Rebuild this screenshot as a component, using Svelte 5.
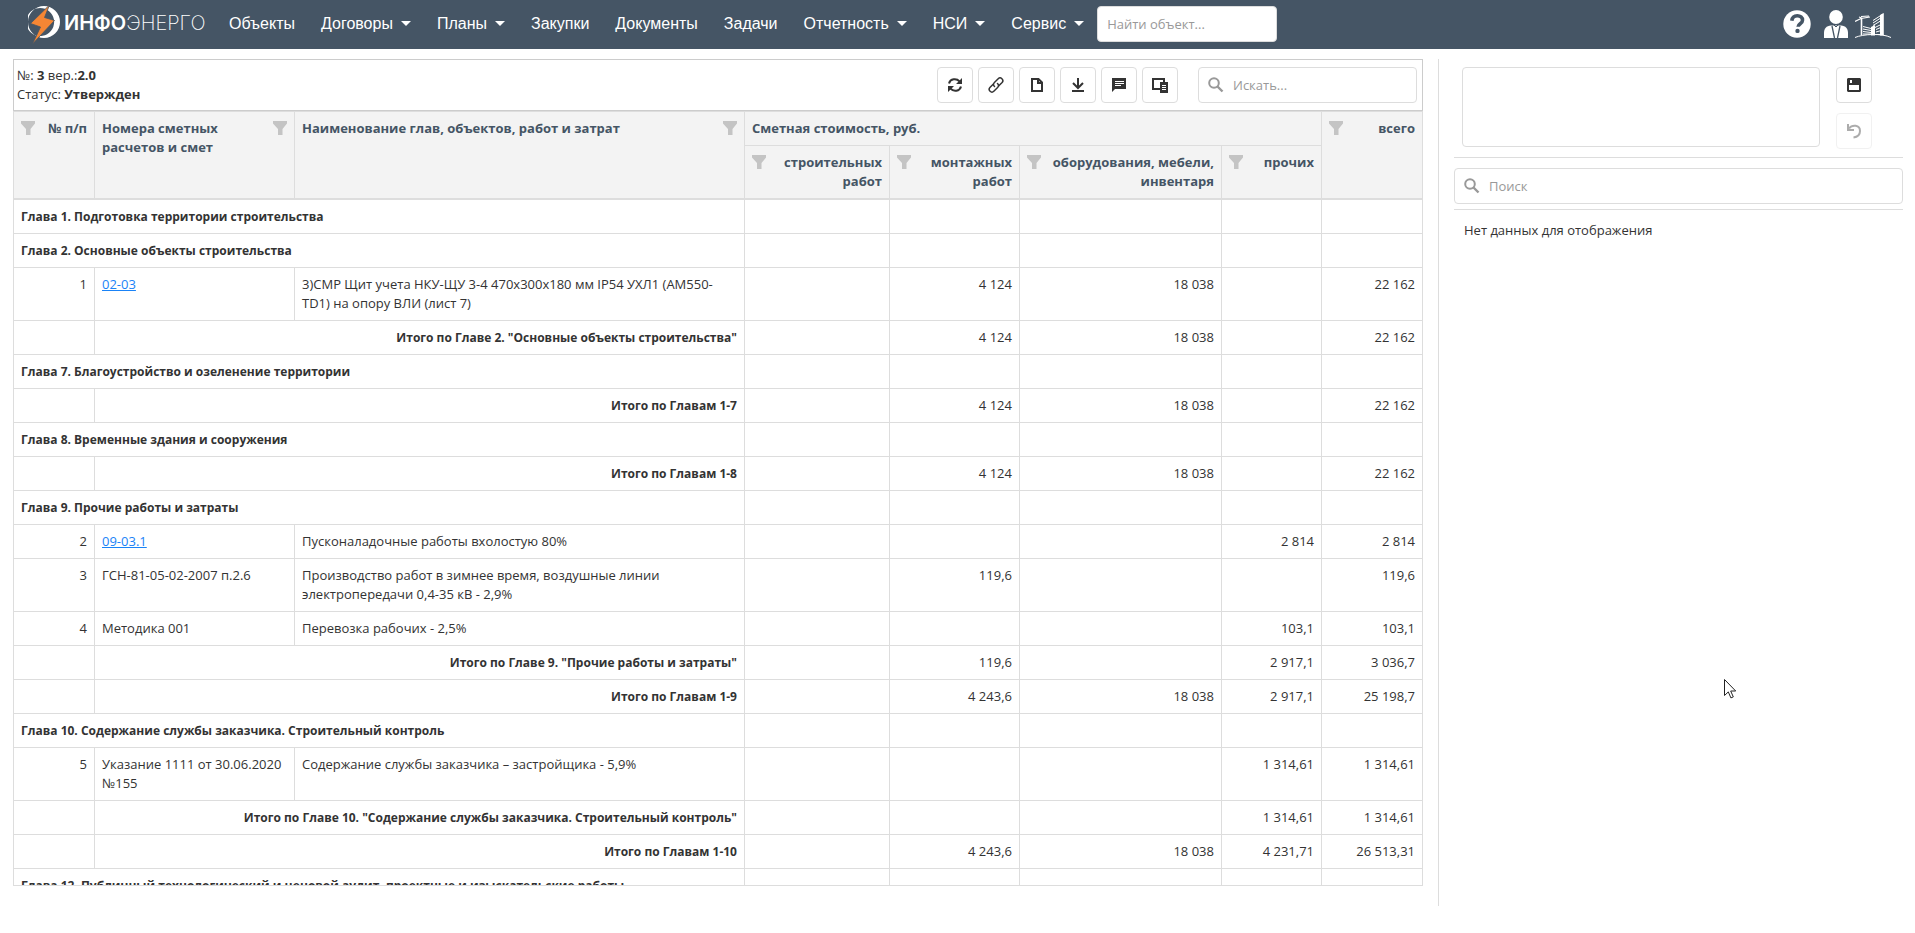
<script>
  let objectQuery = '';
  let gridQuery = '';
  let sideQuery = '';
  let note = '';

  const menu = [
    { title: 'Объекты' },
    { title: 'Договоры', dropdown: true },
    { title: 'Планы', dropdown: true },
    { title: 'Закупки' },
    { title: 'Документы' },
    { title: 'Задачи' },
    { title: 'Отчетность', dropdown: true },
    { title: 'НСИ', dropdown: true },
    { title: 'Сервис', dropdown: true }
  ];

  // type: chapter - заголовок главы, total - итог, item - строка расчета
  const rows = [
    { type: 'chapter', name: 'Глава 1. Подготовка территории строительства' },
    { type: 'chapter', name: 'Глава 2. Основные объекты строительства' },
    { type: 'item', num: 1, code: '02-03', link: true, name: '3)СМР Щит учета НКУ-ЩУ 3-4 470х300х180 мм IP54 УХЛ1 (АМ550-TD1) на опору ВЛИ (лист 7)', values: ['', '4 124', '18 038', '', '22 162'] },
    { type: 'total', name: 'Итого по Главе 2. "Основные объекты строительства"', values: ['', '4 124', '18 038', '', '22 162'] },
    { type: 'chapter', name: 'Глава 7. Благоустройство и озеленение территории' },
    { type: 'total', name: 'Итого по Главам 1-7', values: ['', '4 124', '18 038', '', '22 162'] },
    { type: 'chapter', name: 'Глава 8. Временные здания и сооружения' },
    { type: 'total', name: 'Итого по Главам 1-8', values: ['', '4 124', '18 038', '', '22 162'] },
    { type: 'chapter', name: 'Глава 9. Прочие работы и затраты' },
    { type: 'item', num: 2, code: '09-03.1', link: true, name: 'Пусконаладочные работы вхолостую 80%', values: ['', '', '', '2 814', '2 814'] },
    { type: 'item', num: 3, code: 'ГСН-81-05-02-2007 п.2.6', name: 'Производство работ в зимнее время, воздушные линии электропередачи 0,4-35 кВ - 2,9%', values: ['', '119,6', '', '', '119,6'] },
    { type: 'item', num: 4, code: 'Методика 001', name: 'Перевозка рабочих - 2,5%', values: ['', '', '', '103,1', '103,1'] },
    { type: 'total', name: 'Итого по Главе 9. "Прочие работы и затраты"', values: ['', '119,6', '', '2 917,1', '3 036,7'] },
    { type: 'total', name: 'Итого по Главам 1-9', values: ['', '4 243,6', '18 038', '2 917,1', '25 198,7'] },
    { type: 'chapter', name: 'Глава 10. Содержание службы заказчика. Строительный контроль' },
    { type: 'item', num: 5, code: 'Указание 1111 от 30.06.2020 №155', name: 'Содержание службы заказчика – застройщика - 5,9%', values: ['', '', '', '1 314,61', '1 314,61'] },
    { type: 'total', name: 'Итого по Главе 10. "Содержание службы заказчика. Строительный контроль"', values: ['', '', '', '1 314,61', '1 314,61'] },
    { type: 'total', name: 'Итого по Главам 1-10', values: ['', '4 243,6', '18 038', '4 231,71', '26 513,31'] },
    { type: 'chapter', name: 'Глава 12. Публичный технологический и ценовой аудит, проектные и изыскательские работы' }
  ];

  const empty = ['', '', '', '', ''];
  const costColumns = ['строительных работ', 'монтажных работ', 'оборудования, мебели, инвентаря', 'прочих'];
</script>

{#snippet filter()}
  <button class="filter" aria-label="Фильтр">
    <svg viewBox="0 0 14 14" width="14" height="14"><path d="M0 0h14v2.500L9.500 8V14H5V8L0 2.500z" fill="currentColor" /></svg>
  </button>
{/snippet}

{#snippet magnifier()}
  <svg viewBox="0 0 16 16" width="16" height="16">
    <circle cx="6" cy="6" r="4.800" fill="none" stroke="currentColor" stroke-width="2" />
    <path d="M9.500 9.500l5 5" stroke="currentColor" stroke-width="2.400" />
  </svg>
{/snippet}

<div class="page">
  <header class="navbar">
    <a class="brand" href="/" aria-label="Инфоэнерго">
      <svg viewBox="0 0 36 40" width="36" height="40">
        <path d="M16 2a16 16 0 1 1 0 32a16 16 0 1 1 0-32zM14.500 4.200a14 14 0 1 0 0 27.600a14 14 0 0 0 0-27.600z" fill="#fff" fill-rule="evenodd" />
        <path d="M21.500 1L2.500 19.500l10 3.500L4.500 40L26.500 16.500L16.500 13.500z" fill="#f58634" stroke="#455565" stroke-width="0.800" />
      </svg>
      <span class="brand-name"><b>ИНФО</b>ЭНЕРГО</span>
    </a>

    <nav>
      {#each menu as item}
        <a href="#menu">{item.title}{#if item.dropdown}<span class="caret"></span>{/if}</a>
      {/each}
    </nav>

    <input class="object-search" type="text" placeholder="Найти объект..." aria-label="Найти объект" bind:value={objectQuery} />

    <div class="user-links">
      <a href="#help" aria-label="Справка">
        <svg viewBox="0 0 28 28" width="28" height="28">
          <circle cx="14" cy="14" r="13.700" fill="#fff" />
          <path d="M8.800 10.800c.4-3.300 2.300-5 5.500-5c3 0 5.200 1.700 5.200 4.400c0 3.600-4.400 3.400-4.400 6.600" fill="none" stroke="#455565" stroke-width="3.600" />
          <circle cx="14.500" cy="20.900" r="2.200" fill="#455565" />
        </svg>
      </a>
      <a href="#profile" aria-label="Профиль">
        <svg viewBox="0 0 24 28" width="24" height="28">
          <ellipse cx="12" cy="7" rx="6.800" ry="7" fill="#fff" />
          <path d="M0 28v-5c0-4.500 2.300-7.200 7-7.500h10c4.700.3 7 3 7 7.500v5z" fill="#fff" />
          <path d="M8 16l2.500 12M16 16l-2.500 12" stroke="#455565" stroke-width="1.300" />
          <path d="M10 15l2 2l2-2" fill="none" stroke="#455565" stroke-width="1" />
        </svg>
      </a>
      <a href="#company" aria-label="Компания">
        <svg viewBox="0 0 36 28" width="36" height="28" fill="none" stroke="#fff">
          <path d="M25 5L28.800 3v22.500H25z" fill="#fff" stroke="none" />
          <path d="M16 17l4-2v10.500h-4z" fill="#fff" stroke="none" />
          <path d="M18 10.500L28 4M18 13l10-6.500M18 15.500l10-6M20 17.500l8-4M21 19.500l7-3M21 22l7-2M21 24.500h7" stroke-width="1" />
          <path d="M8 16.500l8 2M8 19l8 1.500M8 21.500l8 1M8 24h8" stroke-width="1" />
          <path d="M6.500 25V8" stroke-width="1.600" />
          <path d="M0 11.500L6 8.500l9-1.500M4 7l4 1.500M6 6.500L14 6" stroke-width="1.200" />
          <path d="M0 27.500c8-3.500 27-4.500 36 0" stroke-width="1" />
        </svg>
      </a>
    </div>
  </header>

  <main>
    <section class="estimate">
      <div class="toolbar">
        <div class="summary">
          <div>№: <b>3</b> вер.:<b>2.0</b></div>
          <div>Статус: <b>Утвержден</b></div>
        </div>
        <div class="tools">
          <button class="tool" aria-label="Обновить">
            <svg viewBox="0 0 16 16" width="16" height="16" fill="none" stroke="currentColor" stroke-width="2">
              <path d="M2 6.500C3.300 1.500 9.500 1 12.500 4.300M14 9.500C12.700 14.500 6.500 15 3.500 11.700" />
              <path d="M15 1v6H9zM1 15V9h6z" fill="currentColor" stroke="none" />
            </svg>
          </button>
          <button class="tool" aria-label="Ссылка">
            <svg viewBox="0 0 18 18" width="18" height="18" fill="none" stroke="currentColor" stroke-width="1.500" stroke-linecap="round">
              <path d="M7.500 10.500C6 9 6.300 7.600 7.400 6.500l3.800-3.800c2.400-2.400 6.200 1.200 3.900 3.700l-3.300 3.400" />
              <path d="M10.500 7.500c1.500 1.500 1.200 2.900.1 4l-3.800 3.800c-2.400 2.400-6.200-1.200-3.900-3.700L6.200 8.200" />
            </svg>
          </button>
          <button class="tool" aria-label="Создать">
            <svg viewBox="0 0 16 16" width="16" height="16"><path d="M3 2h6.500L13 5.500V14H3zM9 2v4h4" fill="none" stroke="currentColor" stroke-width="2" /></svg>
          </button>
          <button class="tool" aria-label="Скачать">
            <svg viewBox="0 0 16 16" width="16" height="16" fill="none" stroke="currentColor" stroke-width="2"><path d="M8 1v9M3 6l5 5l5-5M2 14h12" /></svg>
          </button>
          <button class="tool" aria-label="Комментарии">
            <svg viewBox="0 0 16 16" width="16" height="16">
              <path d="M1 1h14v11H4l-3 3z" fill="currentColor" />
              <path d="M4 4.500h9M4 6.500h9M4 8.500h6" stroke="#fff" />
            </svg>
          </button>
          <button class="tool" aria-label="Сравнить">
            <svg viewBox="0 0 18 18" width="18" height="18">
              <path d="M13 6V3H2v10h8" fill="none" stroke="currentColor" stroke-width="2" />
              <path d="M9 6h8v11H9z" fill="currentColor" />
              <path d="M11 9.500h4M11 11.500h4M11 13.500h4" stroke="#fff" />
            </svg>
          </button>
          <label class="search-box">
            {@render magnifier()}
            <input type="text" placeholder="Искать..." aria-label="Искать" bind:value={gridQuery} />
          </label>
        </div>
      </div>

      <div class="grid">
        <table>
          <colgroup>
            <col class="c-num" />
            <col class="c-code" />
            <col />
            <col class="c-build" />
            <col class="c-mount" />
            <col class="c-equip" />
            <col class="c-sum" />
            <col class="c-sum" />
          </colgroup>
          <thead>
            <tr>
              <th rowspan="2" class="tall"><div class="head">{@render filter()}<span>№ п/п</span></div></th>
              <th rowspan="2" class="tall"><div class="head left"><span>Номера сметных расчетов и смет</span>{@render filter()}</div></th>
              <th rowspan="2" class="tall"><div class="head left"><span>Наименование глав, объектов, работ и затрат</span>{@render filter()}</div></th>
              <th colspan="4"><div class="head left"><span>Сметная стоимость, руб.</span></div></th>
              <th rowspan="2" class="tall"><div class="head">{@render filter()}<span>всего</span></div></th>
            </tr>
            <tr>
              {#each costColumns as title}
                <th class="tall"><div class="head">{@render filter()}<span>{title}</span></div></th>
              {/each}
            </tr>
          </thead>
          <tbody>
            {#each rows as row}
              <tr>
                {#if row.type === 'chapter'}
                  <td colspan="3" class="bold">{row.name}</td>
                {:else if row.type === 'total'}
                  <td></td>
                  <td colspan="2" class="bold number">{row.name}</td>
                {:else}
                  <td class="number">{row.num}</td>
                  <td>
                    {#if row.link}<a href="#estimate">{row.code}</a>{:else}{row.code}{/if}
                  </td>
                  <td>{row.name}</td>
                {/if}
                {#each row.values ?? empty as value}
                  <td class="number">{value}</td>
                {/each}
              </tr>
            {/each}
          </tbody>
        </table>
      </div>
    </section>

    <aside>
      <div class="note">
        <textarea aria-label="Комментарий" bind:value={note}></textarea>
        <div class="note-actions">
          <button class="tool" aria-label="Сохранить">
            <svg viewBox="0 0 16 16" width="16" height="16">
              <path d="M2 1h12l1 1v12l-1 1H2l-1-1V2z" fill="currentColor" />
              <path d="M3 8h10v5H3zM4 3h2v3H4z" fill="#fff" />
            </svg>
          </button>
          <button class="tool" disabled aria-label="Отменить">
            <svg viewBox="0 0 16 16" width="16" height="16" fill="none" stroke="currentColor" stroke-width="2">
              <path d="M3 5.500c3-4 11-4 11 2.500c0 4-3 6-6.500 6.500" />
              <path d="M2 1v6h6" />
            </svg>
          </button>
        </div>
      </div>
      <div class="side-search">
        <label class="search-box">
          {@render magnifier()}
          <input type="text" placeholder="Поиск" aria-label="Поиск" bind:value={sideQuery} />
        </label>
      </div>
      <p>Нет данных для отображения</p>
    </aside>
  </main>

  <svg class="pointer" viewBox="0 0 12 20" width="12" height="20">
    <path d="M.5.500v16l3.800-3.600l2.600 6l2.400-1l-2.600-5.900h5z" fill="#fff" stroke="#222" />
  </svg>
</div>

<style>
  :global(body) {
    margin: 0;
  }

  .page {
    display: flex;
    flex-direction: column;
    height: 100vh;
    overflow: hidden;
    background: #fff;
    color: #333;
    font-family: "Open Sans", sans-serif;
    font-size: 13px;
    line-height: 19px;
  }

  .page * {
    box-sizing: border-box;
  }

  button, input, textarea {
    font: inherit;
    color: inherit;
  }

  svg {
    display: block;
    flex-shrink: 0;
  }

  .navbar {
    display: flex;
    align-items: center;
    height: 49px;
    flex-shrink: 0;
    padding: 0 24px 2px 28px;
    background: #455565;
  }

  .brand {
    display: flex;
    align-items: center;
    width: 188px;
    color: #fff;
    text-decoration: none;
  }

  .brand-name {
    font-family: Inter, sans-serif;
    font-size: 20px;
    font-weight: 200;
  }

  .brand-name b {
    font-weight: 600;
  }

  nav {
    display: flex;
    font-family: "Liberation Sans", Arial, sans-serif;
    font-size: 16px;
  }

  nav a {
    display: flex;
    align-items: center;
    padding: 0 13px;
    color: #fff;
    text-decoration: none;
  }

  .caret {
    margin-left: 8px;
    border: 5px solid transparent;
    border-top-color: #fff;
    border-bottom: 0;
  }

  .object-search {
    width: 180px;
    height: 36px;
    padding: 0 9px;
    border: 1px solid #ddd;
    border-radius: 4px;
    background: #fff;
  }

  input::placeholder {
    color: #999;
    opacity: 1;
  }

  .user-links {
    display: flex;
    gap: 13px;
    margin-left: auto;
  }

  .user-links a:last-child {
    margin-left: -6px;
  }

  main {
    display: grid;
    grid-template-columns: minmax(0, 1fr) 465px;
    gap: 15px;
    flex: 1;
    min-height: 0;
    padding: 10px 12px 27px 13px;
  }

  .estimate {
    display: flex;
    flex-direction: column;
    min-height: 0;
    padding-bottom: 20px;
  }

  .toolbar {
    display: flex;
    justify-content: space-between;
    align-items: center;
    height: 52px;
    flex-shrink: 0;
    padding: 0 5px 0 3px;
    border: 1px solid #ccc;
  }

  .tools {
    display: flex;
    gap: 5px;
  }

  .tool {
    display: flex;
    align-items: center;
    justify-content: center;
    width: 36px;
    height: 36px;
    padding: 0;
    border: 1px solid #ddd;
    border-radius: 4px;
    background: #fff;
    color: #333;
    cursor: pointer;
  }

  .tool:disabled {
    opacity: 0.4;
    cursor: default;
  }

  .search-box {
    display: flex;
    align-items: center;
    gap: 9px;
    height: 36px;
    padding: 0 9px;
    border: 1px solid #ddd;
    border-radius: 4px;
    color: #999;
  }

  .tools .search-box {
    width: 219px;
    margin-left: 15px;
  }

  .search-box input {
    flex: 1;
    min-width: 0;
    padding: 0;
    border: none;
    outline: none;
    background: none;
    color: #333;
  }

  .grid {
    flex: 1;
    min-height: 0;
    overflow: hidden;
    border: 1px solid #ddd;
  }

  table {
    width: 100%;
    table-layout: fixed;
    border-collapse: separate;
    border-spacing: 0;
  }

  .c-num { width: 81px; }
  .c-code { width: 200px; }
  .c-build { width: 145px; }
  .c-mount { width: 130px; }
  .c-equip { width: 202px; }
  .c-sum { width: 100px; }

  th, td {
    padding: 7px;
    border-right: 1px solid #ddd;
    border-bottom: 1px solid #ddd;
    text-align: left;
    vertical-align: top;
  }

  th[rowspan]:last-child, td:last-child {
    border-right: none;
  }

  th {
    background: #f3f3f3;
    color: #455565;
    font-weight: 700;
  }

  th.tall {
    border-bottom-width: 2px;
  }

  .head {
    display: flex;
    justify-content: space-between;
    text-align: right;
  }

  .head.left {
    text-align: left;
  }

  .filter {
    align-self: flex-start;
    padding: 2px 0;
    border: none;
    background: none;
    color: #c4c4c4;
    cursor: pointer;
  }

  td {
    height: 34px;
  }

  td a {
    color: #1a83f7;
  }

  .number {
    text-align: right;
  }

  .bold {
    font-size: 12px;
    font-weight: 700;
  }

  aside {
    padding-left: 15px;
    border-left: 1px solid #ddd;
  }

  .note {
    display: flex;
    gap: 16px;
    padding: 8px 31px 8px 8px;
    border-bottom: 1px solid #ddd;
  }

  textarea {
    flex: 1;
    height: 80px;
    padding: 8px;
    border: 1px solid #ddd;
    border-radius: 4px;
    outline: none;
    resize: none;
  }

  .note-actions {
    display: flex;
    flex-direction: column;
    gap: 10px;
  }

  .side-search {
    padding: 10px 0 5px;
    border-bottom: 1px solid #ddd;
  }

  p {
    margin: 11px 10px;
  }

  .pointer {
    position: fixed;
    left: 90%;
    top: 679px;
    pointer-events: none;
  }
</style>
